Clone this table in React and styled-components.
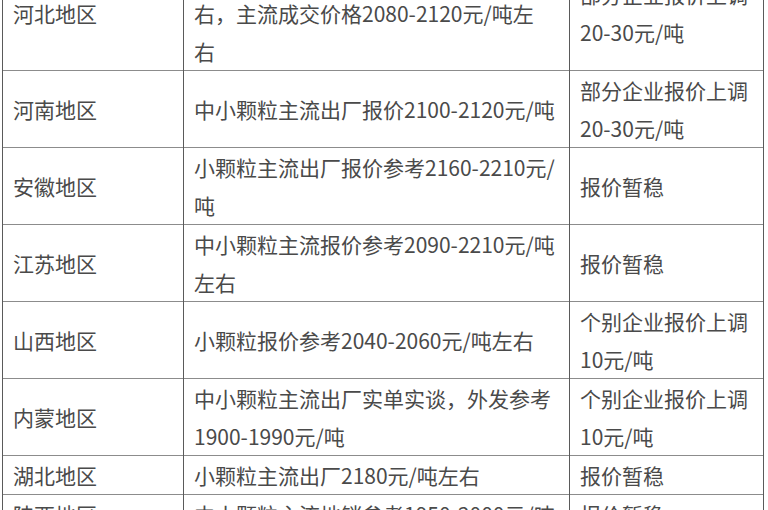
import React from "react";
import styled, { createGlobalStyle } from "styled-components";

const GlobalStyle = createGlobalStyle`
  html, body {
    margin: 0;
    padding: 0;
    background: #ffffff;
    overflow: hidden;
  }
  body {
    font-family: "Noto Sans CJK SC", "Noto Sans", sans-serif;
  }
`;

const Page = styled.div`
  width: 768px;
  height: 510px;
  overflow: hidden;
  background: #ffffff;
  padding-left: 2px;
  box-sizing: border-box;
`;

const Table = styled.table`
  margin-top: -45px;
  width: 761px;
  border-collapse: collapse;
  table-layout: fixed;
  color: #4a4a4a;
  font-size: 21px;
  line-height: 38px;
`;

const Row = styled.tr`
  border-top: 1px solid #8c8c8c;
  border-bottom: 1px solid #8c8c8c;
`;

const Cell = styled.td`
  box-sizing: border-box;
  width: ${(p) => p.$w}px;
  padding: 0 0 0 ${(p) => p.$pad}px;
  border-left: 1px solid #5a5a5a;
  border-right: 1px solid #5a5a5a;
  vertical-align: middle;
  white-space: nowrap;
  overflow: hidden;
`;

const Line = styled.div`
  height: 38px;
`;

const rows = [
  {
    region: "河北地区",
    detail: ["中小颗粒主流出厂报价2100-2150元/吨左", "右，主流成交价格2080-2120元/吨左", "右"],
    change: ["部分企业报价上调", "20-30元/吨"],
  },
  {
    region: "河南地区",
    detail: ["中小颗粒主流出厂报价2100-2120元/吨"],
    change: ["部分企业报价上调", "20-30元/吨"],
  },
  {
    region: "安徽地区",
    detail: ["小颗粒主流出厂报价参考2160-2210元/", "吨"],
    change: ["报价暂稳"],
  },
  {
    region: "江苏地区",
    detail: ["中小颗粒主流报价参考2090-2210元/吨", "左右"],
    change: ["报价暂稳"],
  },
  {
    region: "山西地区",
    detail: ["小颗粒报价参考2040-2060元/吨左右"],
    change: ["个别企业报价上调", "10元/吨"],
  },
  {
    region: "内蒙地区",
    detail: ["中小颗粒主流出厂实单实谈，外发参考", "1900-1990元/吨"],
    change: ["个别企业报价上调", "10元/吨"],
  },
  {
    region: "湖北地区",
    detail: ["小颗粒主流出厂2180元/吨左右"],
    change: ["报价暂稳"],
  },
  {
    region: "陕西地区",
    detail: ["中小颗粒主流地销参考1950-2000元/吨"],
    change: ["报价暂稳"],
  },
];

export default function App() {
  return (
    <>
      <GlobalStyle />
      <Page>
        <Table>
          <tbody>
            {rows.map((r) => (
              <Row key={r.region}>
                <Cell $w={181} $pad={10}>
                  <Line>{r.region}</Line>
                </Cell>
                <Cell $w={386} $pad={10}>
                  {r.detail.map((t, i) => (
                    <Line key={i}>{t}</Line>
                  ))}
                </Cell>
                <Cell $w={194} $pad={10}>
                  {r.change.map((t, i) => (
                    <Line key={i}>{t}</Line>
                  ))}
                </Cell>
              </Row>
            ))}
          </tbody>
        </Table>
      </Page>
    </>
  );
}
